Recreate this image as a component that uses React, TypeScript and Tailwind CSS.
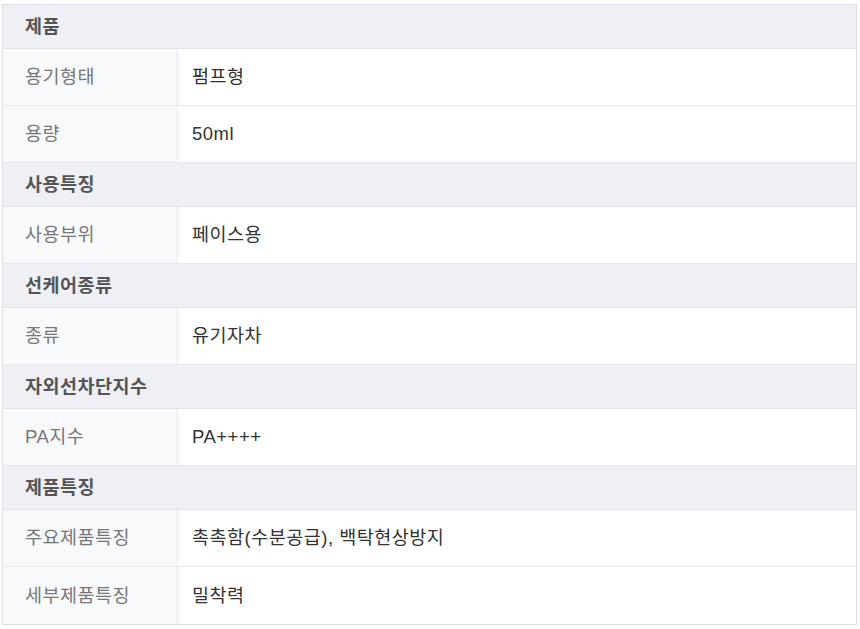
import React from 'react';

type Row = { label: string; value: string };
type Section = { title: string; rows: Row[] };

const sections: Section[] = [
  { title: '제품', rows: [{ label: '용기형태', value: '펌프형' }, { label: '용량', value: '50ml' }] },
  { title: '사용특징', rows: [{ label: '사용부위', value: '페이스용' }] },
  { title: '선케어종류', rows: [{ label: '종류', value: '유기자차' }] },
  { title: '자외선차단지수', rows: [{ label: 'PA지수', value: 'PA++++' }] },
  {
    title: '제품특징',
    rows: [
      { label: '주요제품특징', value: '촉촉함(수분공급), 백탁현상방지' },
      { label: '세부제품특징', value: '밀착력' },
    ],
  },
];

export default function App() {
  return (
    <div className="min-h-screen bg-white pt-[4px] pl-[2px] font-['Liberation_Sans','Noto_Sans_CJK_KR',sans-serif] text-[18.5px] tracking-[0.5px]">
      <div className="w-[855px] border border-[#dcdfe6]">
        {sections.map((s, si) => (
          <div key={s.title}>
            {/* section header */}
            <div className="h-[44px] flex items-center pl-[22px] bg-[#eef0f5] border-b border-[#e1e4ea] font-semibold text-[#555]">
              {s.title}
            </div>
            {s.rows.map((r, ri) => {
              const last = si === sections.length - 1 && ri === s.rows.length - 1;
              return (
                <div key={r.label} className={last ? 'h-[57px] flex' : 'h-[57px] flex border-b border-[#e6e8ed]'}>
                  <div className="w-[175px] shrink-0 flex items-center pl-[22px] bg-[#f8f9fb] border-r border-[#e6e8ed] text-[#777]">
                    {r.label}
                  </div>
                  <div className="flex-1 flex items-center pl-[14px] text-[#333]">{r.value}</div>
                </div>
              );
            })}
          </div>
        ))}
      </div>
    </div>
  );
}
